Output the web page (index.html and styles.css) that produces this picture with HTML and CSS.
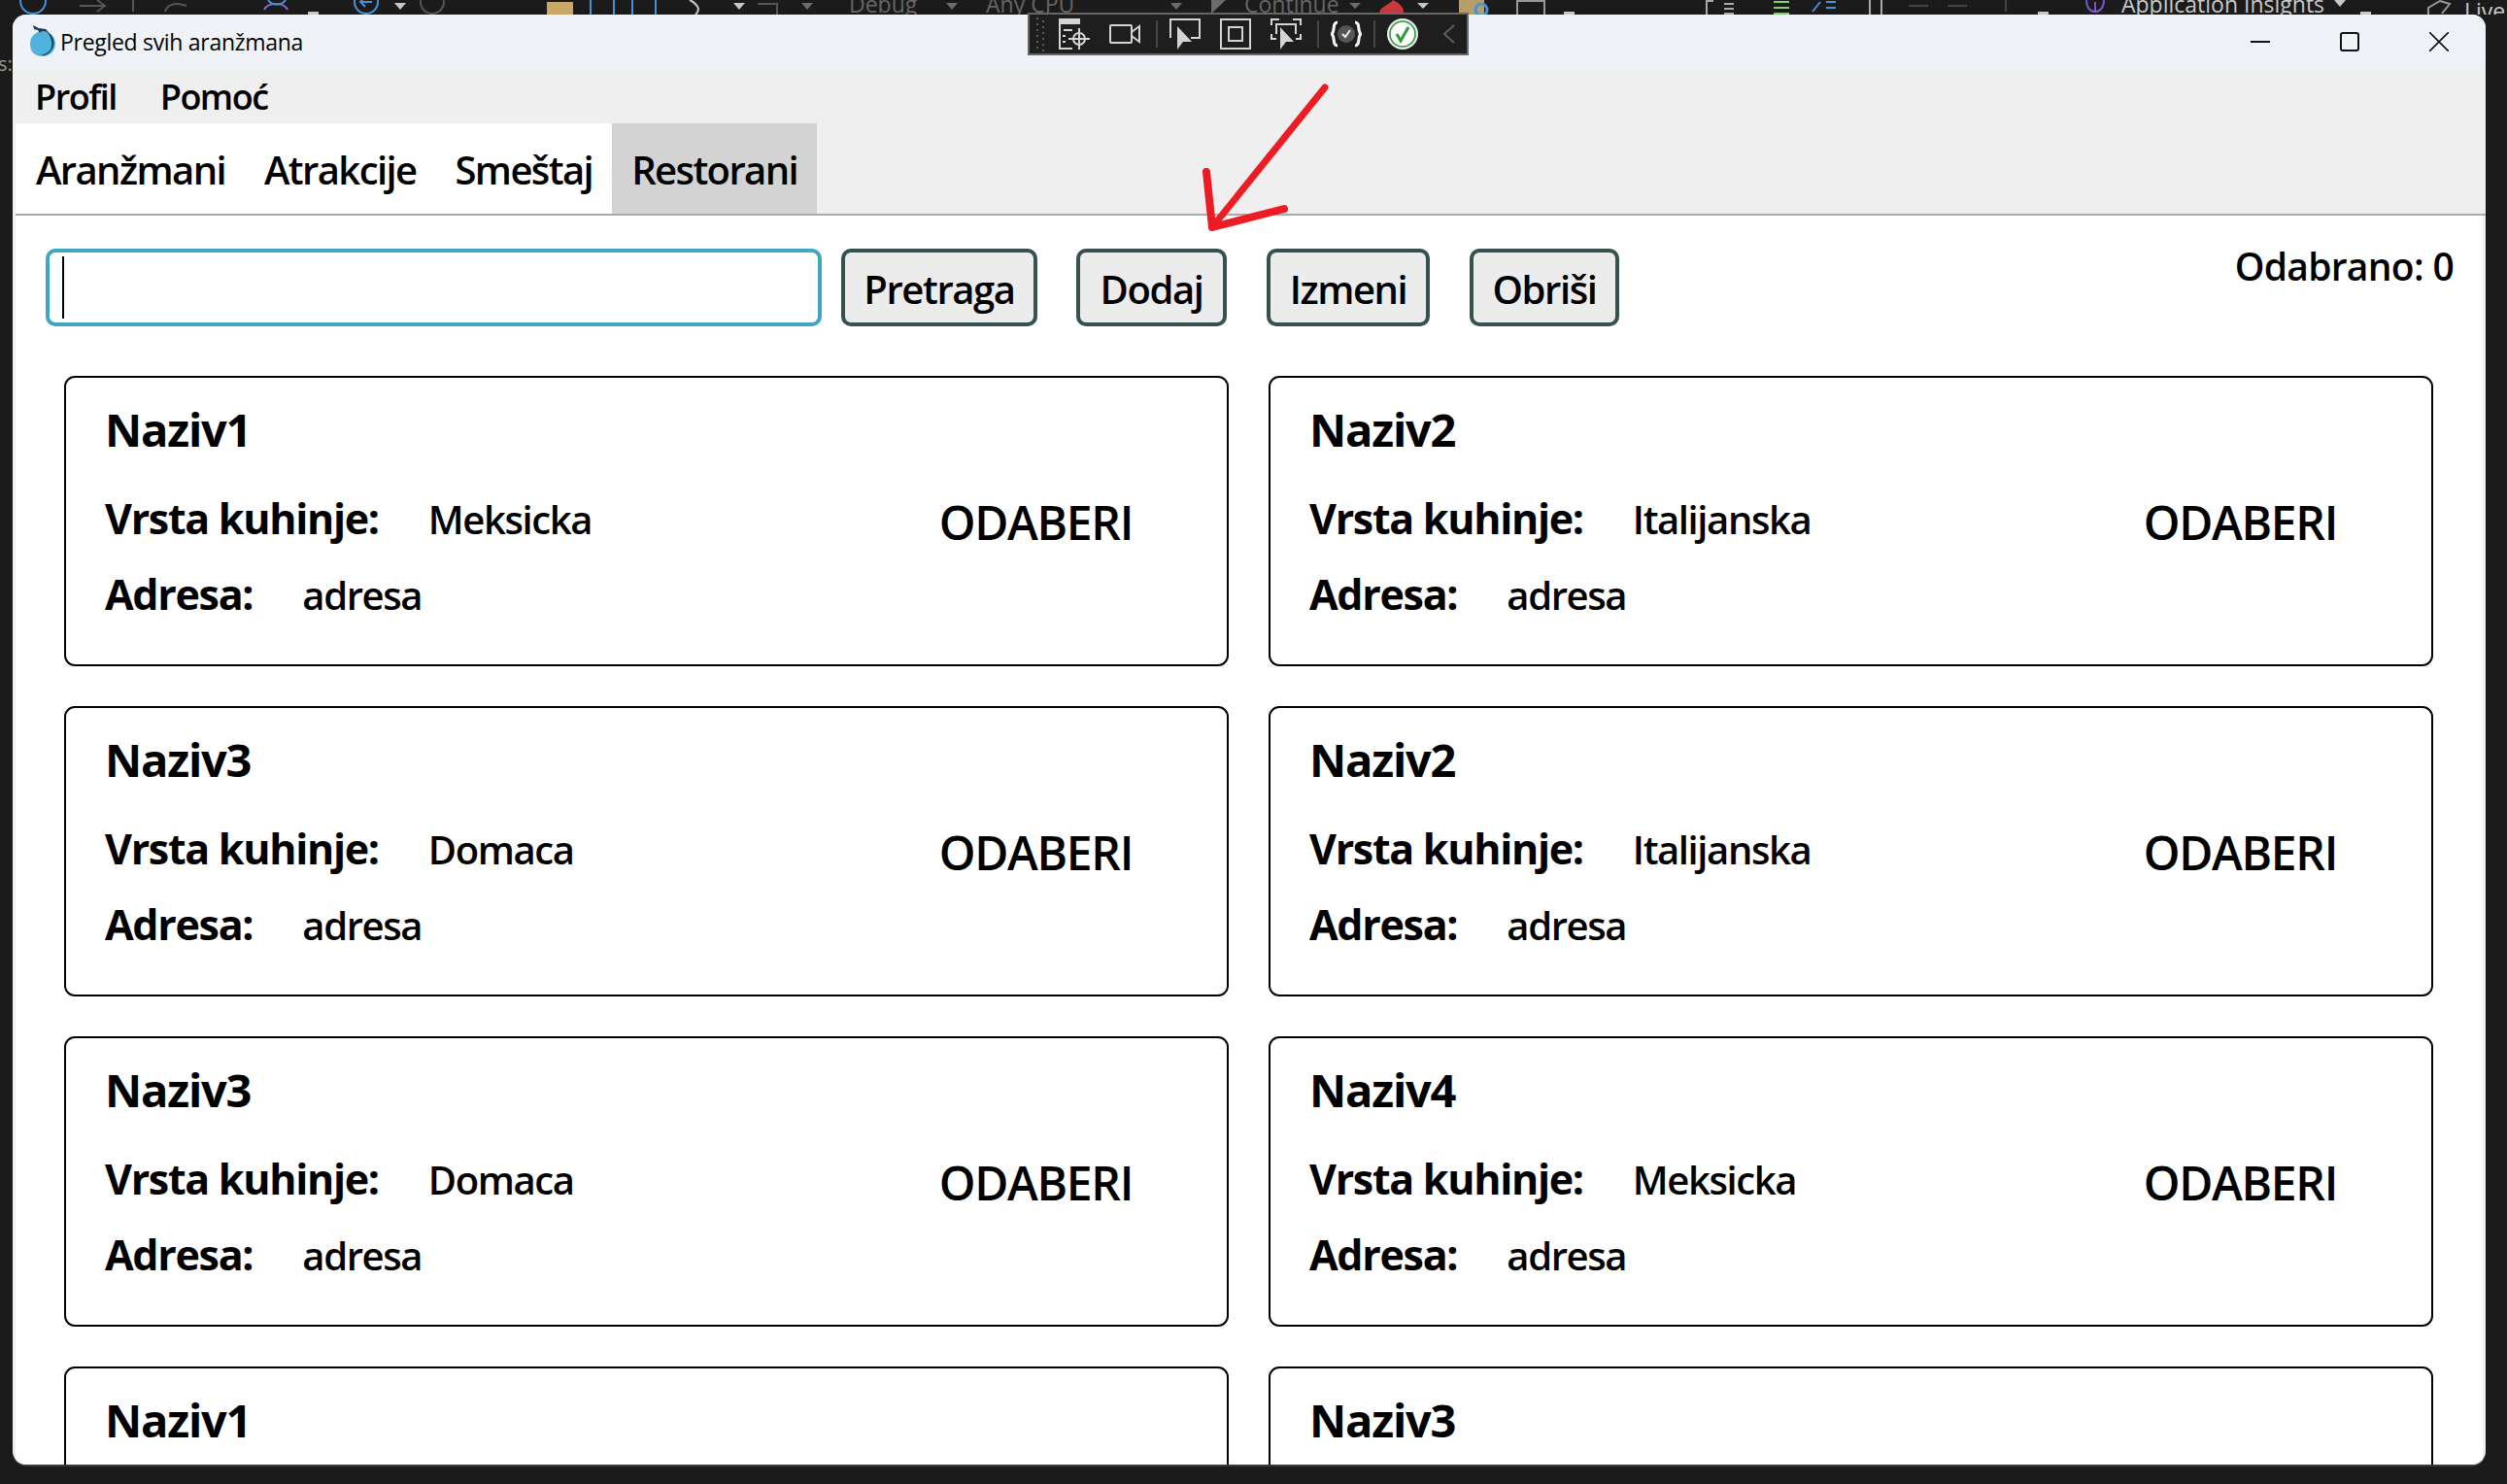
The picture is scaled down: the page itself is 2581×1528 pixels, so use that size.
FILE: index.html
```html
<!DOCTYPE html>
<html lang="en">
<head>
    <meta charset="UTF-8">
    <meta name="viewport" content="width=device-width, initial-scale=1.0">
    <title>Pregled svih aranžmana</title>
    <link rel="stylesheet" href="styles.css">
</head>
<body>
    <!-- ide toolbar that shows behind the window -->
    <svg class="ide-strip" width="2581" height="15" viewBox="0 0 2581 15">
        <g fill="none" stroke-width="2">
            <circle cx="34" cy="1" r="13" stroke="#4a90d9"/>
            <path d="M82 6H108M100 0L108 6L100 12" stroke="#555"/>
            <path d="M137 0V12M170 12C172 4 182 2 192 6" stroke="#555"/>
            <path d="M272 10C276 2 292 2 296 10" stroke="#8a63d2"/>
            <path d="M276 0C280 6 290 6 294 0" stroke="#4a90d9"/>
            <circle cx="377" cy="2" r="12" stroke="#4a90d9"/>
            <path d="M383 2H371M376 -3L371 2L376 7" stroke="#4a90d9"/>
            <circle cx="445" cy="2" r="12" stroke="#555"/>
            <path d="M710 0C718 4 722 10 716 15" stroke="#ccc"/>
            <path d="M780 4H800V15" stroke="#555"/>
            <rect x="608" y="-4" width="24" height="22" stroke="#4a90d9"/>
            <rect x="651" y="-4" width="24" height="22" stroke="#4a90d9"/>
            <path d="M1562 15V1H1590V15" stroke="#999"/>
            <path d="M1757 15V1H1764M1775 4H1785M1775 9H1785M1775 14H1785" stroke="#aaa"/>
            <path d="M1826 2H1842M1826 8H1842M1826 14H1842" stroke="#7fd36b"/>
            <path d="M1866 12L1874 2M1880 2H1890M1880 8H1890" stroke="#4a90d9"/>
            <path d="M1925 0V15M1937 0V15" stroke="#aaa"/>
            <path d="M1965 6H1985M2005 6H2025M2065 0V12" stroke="#444"/>
            <path d="M2148 0C2148 8 2152 12 2157 12C2162 12 2166 8 2166 0M2157 2V12" stroke="#7b55c7"/>
            <path d="M2500 15V8L2512 1L2522 4L2514 14" stroke="#999"/>
        </g>
        <g fill="#c8c8c8">
            <path d="M406 3H418L412 10Z"/>
            <path d="M755 3H767L761 10Z"/>
            <path d="M2403 0H2415L2409 7Z"/>
            <path d="M1459 3H1471L1465 9Z"/>
            <rect x="317" y="12" width="11" height="3"/>
            <rect x="1610" y="12" width="11" height="3"/>
            <rect x="2098" y="12" width="11" height="3"/>
            <rect x="2430" y="12" width="11" height="3"/>
        </g>
        <g fill="#6b6b6b">
            <path d="M974 3H986L980 10Z"/>
            <path d="M1205 3H1217L1211 10Z"/>
            <path d="M1247 0H1262L1247 14Z"/>
            <path d="M1389 3H1401L1395 9Z"/>
            <path d="M825 3H837L831 10Z"/>
        </g>
        <path d="M563 15V2H590V15Z" fill="#c9a866"/>
        <path d="M1420 15C1420 6 1430 6 1434 0C1442 4 1446 8 1445 15Z" fill="#c8393f"/>
        <rect x="1502" y="0" width="26" height="15" fill="#b59e6a"/>
        <circle cx="1525" cy="10" r="6" fill="none" stroke="#4a90d9" stroke-width="3"/>
        <text class="ide-text ide-text-dim" x="874" y="13">Debug</text>
        <text class="ide-text ide-text-dim" x="1015" y="13">Any CPU</text>
        <text class="ide-text ide-text-dim" x="1281" y="13">Continue</text>
        <text class="ide-text" x="2184" y="13">Application Insights</text>
        <text class="ide-text" x="2537" y="20">Live</text>
    </svg>

    <span class="ide-side">s:</span>

    <div class="window">
        <div class="titlebar">
            <svg class="app-logo" width="32" height="34" viewBox="0 0 32 34">
                <path d="M3 24C4 29 9 33 16 33C12 32 6 30 3 24Z" fill="#8a9aa6"/>
                <circle cx="16" cy="20" r="13" fill="#4fb3e0"/>
                <path d="M19 7C29 11 31 25 20 31C18 32 16 32 14 32C18 31 22 29 24 26C27 20 25 12 19 7Z" fill="#1d3b52"/>
                <path d="M6 1L12 4L19 5L22 8L15 7L13 9L11 6L7 5Z" fill="#1d3b52"/>
            </svg>
            <span class="window-title">Pregled svih aranžmana</span>
            <div class="window-controls">
                <svg width="20" height="20" viewBox="0 0 20 20"><path d="M0 10H20" stroke="#111" stroke-width="2"/></svg>
                <svg width="20" height="20" viewBox="0 0 20 20"><rect x="1" y="1" width="18" height="18" rx="2" fill="none" stroke="#111" stroke-width="2"/></svg>
                <svg width="20" height="20" viewBox="0 0 20 20"><path d="M0 0L20 20M20 0L0 20" stroke="#111" stroke-width="1.6"/></svg>
            </div>
        </div>

        <div class="menu">
            <span class="menu-item">Profil</span>
            <span class="menu-item">Pomoć</span>
        </div>

        <div class="tabs">
            <span class="tab">Aranžmani</span>
            <span class="tab">Atrakcije</span>
            <span class="tab">Smeštaj</span>
            <span class="tab active">Restorani</span>
        </div>

        <div class="content">
            <div class="actions">
                <div class="search"><span class="caret"></span></div>
                <button class="btn btn-search">Pretraga</button>
                <button class="btn btn-add">Dodaj</button>
                <button class="btn btn-edit">Izmeni</button>
                <button class="btn btn-delete">Obriši</button>
                <span class="selected">Odabrano: 0</span>
            </div>

            <div class="cards">
                <div class="card">
                    <div class="card-info">
                        <h2>Naziv1</h2>
                        <div class="row"><b>Vrsta kuhinje:</b><span>Meksicka</span></div>
                        <div class="row"><b>Adresa:</b><span>adresa</span></div>
                    </div>
                    <span class="pick">ODABERI</span>
                </div>
                <div class="card">
                    <div class="card-info">
                        <h2>Naziv2</h2>
                        <div class="row"><b>Vrsta kuhinje:</b><span>Italijanska</span></div>
                        <div class="row"><b>Adresa:</b><span>adresa</span></div>
                    </div>
                    <span class="pick">ODABERI</span>
                </div>
                <div class="card">
                    <div class="card-info">
                        <h2>Naziv3</h2>
                        <div class="row"><b>Vrsta kuhinje:</b><span>Domaca</span></div>
                        <div class="row"><b>Adresa:</b><span>adresa</span></div>
                    </div>
                    <span class="pick">ODABERI</span>
                </div>
                <div class="card">
                    <div class="card-info">
                        <h2>Naziv2</h2>
                        <div class="row"><b>Vrsta kuhinje:</b><span>Italijanska</span></div>
                        <div class="row"><b>Adresa:</b><span>adresa</span></div>
                    </div>
                    <span class="pick">ODABERI</span>
                </div>
                <div class="card">
                    <div class="card-info">
                        <h2>Naziv3</h2>
                        <div class="row"><b>Vrsta kuhinje:</b><span>Domaca</span></div>
                        <div class="row"><b>Adresa:</b><span>adresa</span></div>
                    </div>
                    <span class="pick">ODABERI</span>
                </div>
                <div class="card">
                    <div class="card-info">
                        <h2>Naziv4</h2>
                        <div class="row"><b>Vrsta kuhinje:</b><span>Meksicka</span></div>
                        <div class="row"><b>Adresa:</b><span>adresa</span></div>
                    </div>
                    <span class="pick">ODABERI</span>
                </div>
                <div class="card">
                    <div class="card-info">
                        <h2>Naziv1</h2>
                        <div class="row"><b>Vrsta kuhinje:</b><span>Meksicka</span></div>
                        <div class="row"><b>Adresa:</b><span>adresa</span></div>
                    </div>
                    <span class="pick">ODABERI</span>
                </div>
                <div class="card">
                    <div class="card-info">
                        <h2>Naziv3</h2>
                        <div class="row"><b>Vrsta kuhinje:</b><span>Domaca</span></div>
                        <div class="row"><b>Adresa:</b><span>adresa</span></div>
                    </div>
                    <span class="pick">ODABERI</span>
                </div>
            </div>
        </div>
    </div>

    <!-- debug toolbar floating over the window -->
    <div class="debug-bar">
        <svg class="grip" width="10" height="36" viewBox="0 0 10 36">
            <path d="M2 1V36M8 4V36" stroke="#5a5a5a" stroke-width="2" stroke-dasharray="2 4" fill="none"/>
        </svg>
        <svg class="dbg-icon first" width="32" height="32" viewBox="0 0 32 32">
            <rect width="22" height="6" fill="#d4d4d4"/>
            <path d="M1 6V31H14M5 12H14M4 18H7M4 24H7" stroke="#d4d4d4" stroke-width="2" fill="none"/>
            <circle cx="21" cy="21" r="6" stroke="#d4d4d4" stroke-width="2" fill="none"/>
            <path d="M21 10V32M10 21H32" stroke="#d4d4d4" stroke-width="2"/>
        </svg>
        <svg class="dbg-icon" width="32" height="32" viewBox="0 0 32 32">
            <rect x="1" y="7" width="22" height="18" rx="1" stroke="#d4d4d4" stroke-width="2" fill="none"/>
            <path d="M23 14L31 8V24L23 18" stroke="#d4d4d4" stroke-width="2" fill="none"/>
        </svg>
        <span class="dbg-sep"></span>
        <svg class="dbg-icon after-sep" width="32" height="32" viewBox="0 0 32 32">
            <path d="M1 20V1H31V20H22" stroke="#d4d4d4" stroke-width="2" fill="none"/>
            <path d="M8 8V32L14 24H23Z" fill="#d4d4d4"/>
        </svg>
        <svg class="dbg-icon" width="32" height="32" viewBox="0 0 32 32">
            <rect x="1" y="1" width="30" height="30" stroke="#d4d4d4" stroke-width="2" fill="none"/>
            <rect x="9" y="9" width="14" height="14" stroke="#d4d4d4" stroke-width="2" fill="none"/>
        </svg>
        <svg class="dbg-icon" width="32" height="32" viewBox="0 0 32 32">
            <path d="M1 7V1H9M23 1H31V7M1 16V21H6M31 16V21H26M6 16V6H26V16" stroke="#d4d4d4" stroke-width="2" fill="none"/>
            <path d="M10 9V32L16 24H24Z" fill="#d4d4d4"/>
        </svg>
        <span class="dbg-sep"></span>
        <svg class="dbg-icon after-sep" width="32" height="32" viewBox="0 0 32 32">
            <circle cx="16" cy="16" r="9" fill="#555"/>
            <path d="M12 16L15 19L20 12" stroke="#eee" stroke-width="2" fill="none"/>
            <path d="M7 4C1 4 5 13 1 16C5 19 1 28 7 28M25 4C31 4 27 13 31 16C27 19 31 28 25 28" stroke="#f4f4f4" stroke-width="3" fill="none"/>
        </svg>
        <span class="dbg-sep dbg-sep-last"></span>
        <svg class="dbg-icon after-sep" width="32" height="32" viewBox="0 0 32 32">
            <circle cx="16" cy="16" r="16" fill="#eee"/>
            <circle cx="16" cy="16" r="13" fill="#fff" stroke="#2a9d3a" stroke-width="1.6"/>
            <path d="M10 16L14 23L22 9" stroke="#2a9d3a" stroke-width="3" fill="none"/>
        </svg>
        <svg class="dbg-chevron" width="12" height="20" viewBox="0 0 12 20">
            <path d="M11 1L1 10L11 19" stroke="#5c5c5c" stroke-width="2" fill="none"/>
        </svg>
    </div>

    <!-- annotation arrow -->
    <svg class="arrow" width="140" height="160" viewBox="0 0 140 160">
        <path d="M130 6L14 150" stroke="#ed1c24" stroke-width="7" stroke-linecap="round" fill="none"/>
        <path d="M8 93L14 150L88 131" stroke="#ed1c24" stroke-width="8" stroke-linecap="round" stroke-linejoin="round" fill="none"/>
    </svg>
</body>
</html>
```

FILE: styles.css
```css
body {
    position: relative;
    margin: 0;
    height: 1528px;
    overflow: hidden;
    background-color: #1b1b1b;
    font-family: "Open Sans", "Noto Sans", sans-serif;
    color: #000;
}

.ide-strip {
    display: block;
}

.ide-text {
    font-family: "Open Sans", sans-serif;
    font-size: 23px;
    fill: #c8c8c8;
}

.ide-text-dim {
    fill: #666;
}

.ide-side {
    position: absolute;
    left: -2px;
    top: 52px;
    font-size: 20px;
    color: #999;
}

.window {
    display: flex;
    flex-direction: column;
    height: 1493px;
    margin: 0 22px 0 13px;
    border-radius: 14px;
    overflow: hidden;
    background-color: #efefef;
    box-shadow: 0 2px 0 #3a3a3a;
}

.titlebar {
    display: flex;
    align-items: center;
    height: 56px;
    flex-shrink: 0;
    padding-left: 15px;
    background-color: #eff3f8;
}

.app-logo {
    margin-top: -2px;
}

.window-title {
    margin-left: 2px;
    font-size: 23px;
    letter-spacing: -0.3px;
}

.window-controls {
    display: flex;
    gap: 72px;
    margin-left: auto;
    margin-right: 38px;
}

.menu {
    display: flex;
    gap: 45px;
    align-items: center;
    height: 56px;
    flex-shrink: 0;
    padding-left: 23px;
}

.menu-item {
    font-size: 36px;
    font-weight: 550;
    letter-spacing: -1.5px;
}

.tabs {
    display: flex;
    height: 93px;
    flex-shrink: 0;
    margin-left: 3px;
    border-bottom: 2px solid #aaa;
}

.tab {
    display: flex;
    align-items: center;
    padding: 2px 20px 0;
    background-color: #fff;
    font-size: 40px;
    font-weight: 550;
    letter-spacing: -1.6px;
}

.tab:first-child {
    padding-left: 21px;
}

.tab.active {
    background-color: #d3d3d3;
}

.content {
    flex: 1;
    min-height: 0;
    margin: 0 3px;
    padding: 34px 30px 0 31px;
    background-color: #fff;
    overflow: hidden;
}

.actions {
    display: flex;
    align-items: flex-start;
    height: 80px;
}

.search {
    display: flex;
    align-items: center;
    box-sizing: border-box;
    width: 799px;
    height: 80px;
    margin-right: 20px;
    padding-left: 13px;
    border: 4px solid #3fa7c4;
    border-radius: 10px;
}

.caret {
    width: 2px;
    height: 64px;
    background-color: #000;
}

.btn {
    box-sizing: border-box;
    height: 80px;
    padding: 3px 0 0;
    border: 4px solid #35524f;
    border-radius: 10px;
    background-color: #ececec;
    font-family: inherit;
    font-size: 40px;
    font-weight: 550;
    letter-spacing: -1.4px;
    color: #000;
}

.btn-search {
    width: 202px;
    margin-right: 40px;
}

.btn-add {
    width: 155px;
    margin-right: 41px;
}

.btn-edit {
    width: 168px;
    margin-right: 41px;
}

.btn-delete {
    width: 154px;
}

.selected {
    margin-left: auto;
    margin-top: -9px;
    font-size: 39px;
    font-weight: 550;
    letter-spacing: -0.7px;
}

.cards {
    display: grid;
    grid-template-columns: 1199px 1199px;
    grid-auto-rows: 299px;
    gap: 41px;
    margin-top: 51px;
    padding-left: 19px;
}

.card {
    display: flex;
    align-items: flex-start;
    box-sizing: border-box;
    padding: 23px 97px 0 40px;
    border: 2px solid #000;
    border-radius: 11px;
}

.card-info {
    flex: 1;
}

.card h2 {
    margin: 0;
    font-size: 47px;
    line-height: 60px;
    letter-spacing: -1.2px;
}

.row {
    display: flex;
    align-items: baseline;
    gap: 51px;
    height: 78px;
    line-height: 78px;
    font-size: 40px;
    font-weight: 550;
    letter-spacing: -1.4px;
}

.row:first-of-type {
    margin-top: 23px;
}

.row b {
    font-size: 43px;
    font-weight: 700;
    letter-spacing: -1.3px;
}

.pick {
    margin-top: 93px;
    font-size: 48px;
    font-weight: 550;
    letter-spacing: -1.3px;
}

.debug-bar {
    position: absolute;
    left: 1058px;
    top: 13px;
    display: flex;
    align-items: center;
    box-sizing: border-box;
    width: 454px;
    height: 44px;
    padding-left: 6px;
    border: 2px solid #666;
    background-color: #1e1e1e;
}

.dbg-icon {
    flex-shrink: 0;
}

.dbg-icon.first {
    margin-left: 14px;
}

.dbg-icon + .dbg-icon {
    margin-left: 20px;
}

.dbg-icon.after-sep {
    margin-left: 12px;
}

.dbg-sep {
    width: 2px;
    height: 28px;
    margin-left: 16px;
    background-color: #444;
}

.dbg-sep-last {
    margin-left: 12px;
}

.dbg-chevron {
    margin-left: 26px;
}

.arrow {
    position: absolute;
    left: 1234px;
    top: 84px;
}
```
